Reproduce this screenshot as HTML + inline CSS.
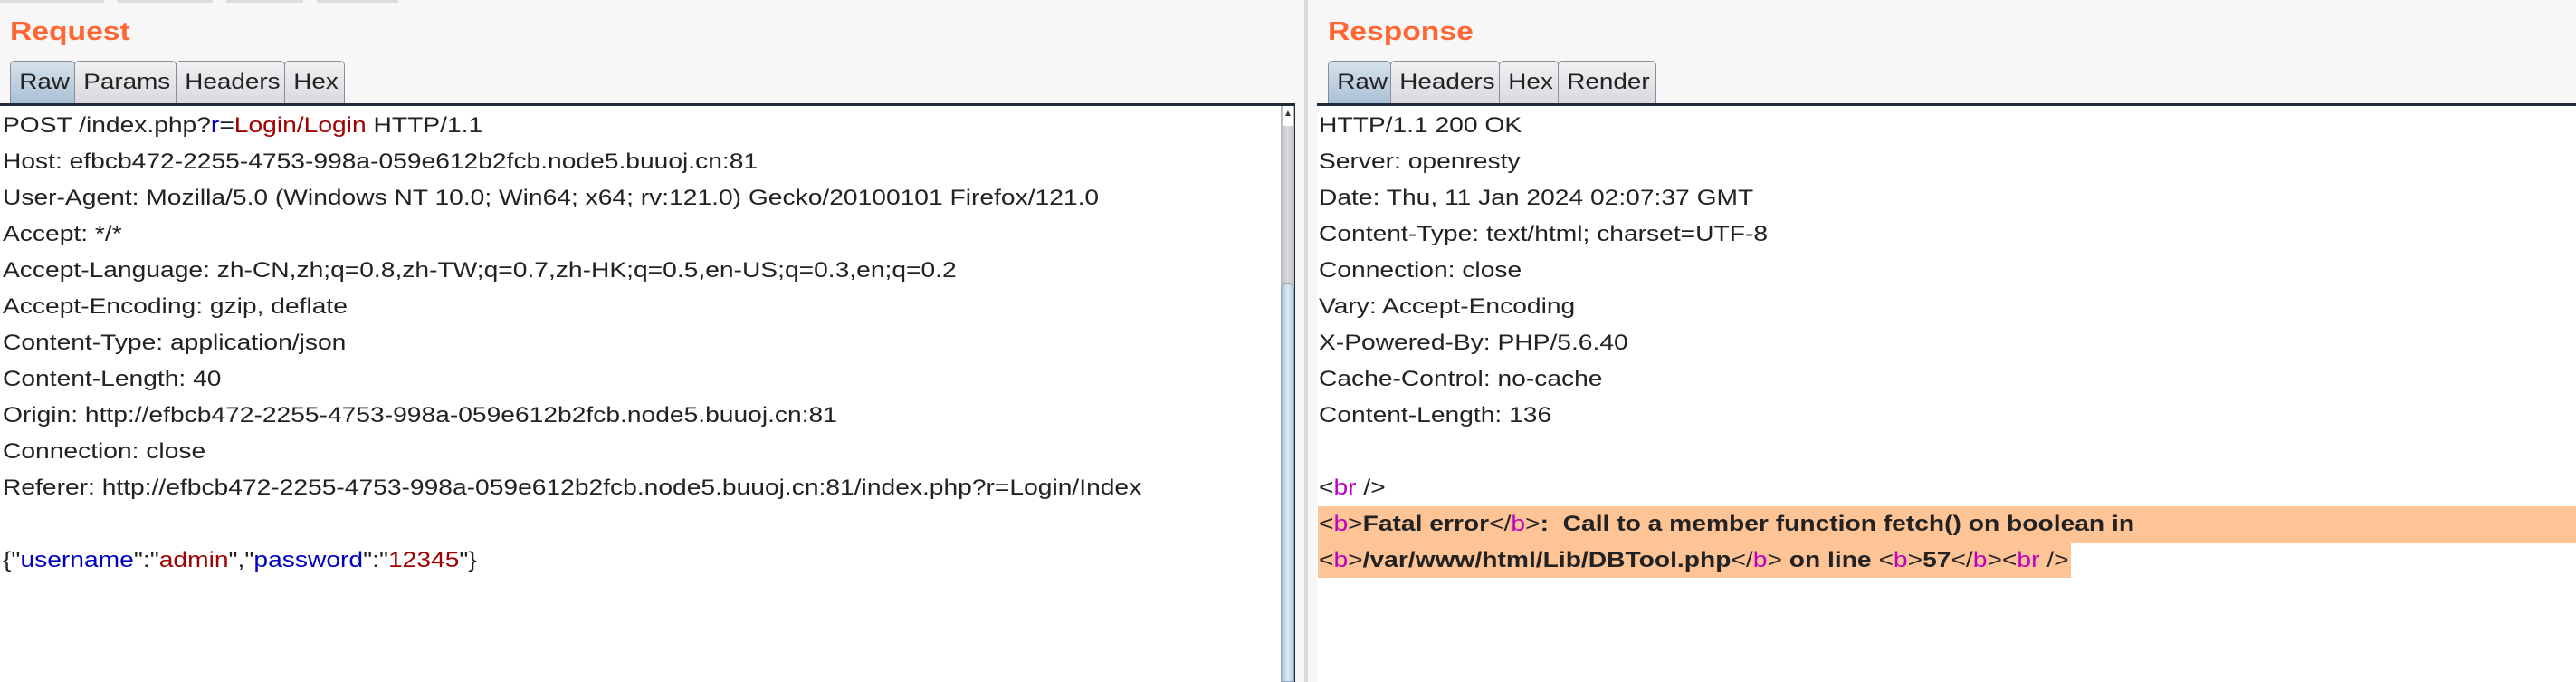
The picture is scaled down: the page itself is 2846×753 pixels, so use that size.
<!DOCTYPE html>
<html><head><meta charset="utf-8"><style>
*{margin:0;padding:0;box-sizing:border-box}
body{width:2846px;height:753px;overflow:hidden;background:#f7f7f7;font-family:"Liberation Sans",Arial,sans-serif;color:#222;position:relative}
.abs{position:absolute}
.title{position:absolute;top:17px;font-size:29px;font-weight:bold;color:#ff6633;transform:scaleX(1.16);transform-origin:0 0;line-height:36px}
.tab{position:absolute;top:67px;height:48px;border:1px solid #8c8c98;border-bottom:none;border-radius:5px 5px 0 0;background:linear-gradient(#f2f2f4,#d8d8de);font-size:24px;line-height:46px;overflow:hidden}
.tab.sel{background:linear-gradient(#d6e2ec,#a8c0d4)}
.tab span{display:inline-block;transform:scaleX(1.16);transform-origin:0 0;padding-left:8px}
.pane{position:absolute;top:117px;background:#fff;height:636px}
.lines{position:absolute;top:119px;font-size:24px}
.l{height:40px;line-height:40px;white-space:pre;transform:scaleX(1.175);transform-origin:0 0}
.b{color:#0000c0}.r{color:#a00000}.m{color:#c000c0}
.hl{background:#ffc496}
strong{font-weight:bold}
</style></head><body>
<div class="abs" style="left:0;top:0;width:115px;height:3px;background:#ddd"></div>
<div class="abs" style="left:130px;top:0;width:105px;height:3px;background:#ddd"></div>
<div class="abs" style="left:250px;top:0;width:85px;height:3px;background:#ddd"></div>
<div class="abs" style="left:350px;top:0;width:90px;height:3px;background:#ddd"></div>

<div class="title" style="left:11px">Request</div>
<div class="title" style="left:1467px">Response</div>

<div class="tab sel" style="left:11px;width:72px"><span>Raw</span></div>
<div class="tab" style="left:82px;width:113px"><span>Params</span></div>
<div class="tab" style="left:194px;width:121px"><span>Headers</span></div>
<div class="tab" style="left:314px;width:67px"><span>Hex</span></div>

<div class="tab sel" style="left:1467px;width:70px"><span>Raw</span></div>
<div class="tab" style="left:1536px;width:121px"><span>Headers</span></div>
<div class="tab" style="left:1656px;width:66px"><span>Hex</span></div>
<div class="tab" style="left:1721px;width:109px"><span>Render</span></div>

<div class="abs" style="left:0;top:114px;width:1431px;height:3px;background:#1e2a36"></div>
<div class="abs" style="left:1455px;top:114px;width:1391px;height:3px;background:#1e2a36"></div>

<div class="pane" style="left:0;width:1415px"></div>
<div class="abs" style="left:1415px;top:117px;width:15px;height:636px;background:linear-gradient(90deg,#b8b8bc,#dcdce0,#c0c0c4)"></div>
<div class="abs" style="left:1415px;top:313px;width:15px;height:440px;background:linear-gradient(90deg,#a9c0d4,#dcebf6,#b8cde0);border-radius:6px 6px 0 0;border:1px solid #8fa6bb"></div>
<div class="abs" style="left:1417px;top:117px;width:12px;height:22px;background:#fff;color:#333;font-size:10px;text-align:center;line-height:18px">▲</div>
<div class="abs" style="left:1430px;top:117px;width:1px;height:636px;background:#1e2a36"></div>
<div class="abs" style="left:1441px;top:0;width:4px;height:753px;background:#d8d8de"></div>
<div class="pane" style="left:1455px;width:1391px"></div>

<div class="lines" style="left:3px">
<div class="l">POST /index.php?<span class="b">r</span>=<span class="r">Login/Login</span> HTTP/1.1</div>
<div class="l">Host: efbcb472-2255-4753-998a-059e612b2fcb.node5.buuoj.cn:81</div>
<div class="l">User-Agent: Mozilla/5.0 (Windows NT 10.0; Win64; x64; rv:121.0) Gecko/20100101 Firefox/121.0</div>
<div class="l">Accept: */*</div>
<div class="l">Accept-Language: zh-CN,zh;q=0.8,zh-TW;q=0.7,zh-HK;q=0.5,en-US;q=0.3,en;q=0.2</div>
<div class="l">Accept-Encoding: gzip, deflate</div>
<div class="l">Content-Type: application/json</div>
<div class="l">Content-Length: 40</div>
<div class="l">Origin: http://efbcb472-2255-4753-998a-059e612b2fcb.node5.buuoj.cn:81</div>
<div class="l">Connection: close</div>
<div class="l">Referer: http://efbcb472-2255-4753-998a-059e612b2fcb.node5.buuoj.cn:81/index.php?r=Login/Index</div>
<div class="l"> </div>
<div class="l">{"<span class="b">username</span>":"<span class="r">admin</span>","<span class="b">password</span>":"<span class="r">12345</span>"}</div>
</div>

<div class="abs hl" style="left:1456px;top:559px;width:1390px;height:40px"></div>
<div class="abs hl" style="left:1456px;top:599px;width:832px;height:39px"></div>

<div class="lines" style="left:1457px">
<div class="l">HTTP/1.1 200 OK</div>
<div class="l">Server: openresty</div>
<div class="l">Date: Thu, 11 Jan 2024 02:07:37 GMT</div>
<div class="l">Content-Type: text/html; charset=UTF-8</div>
<div class="l">Connection: close</div>
<div class="l">Vary: Accept-Encoding</div>
<div class="l">X-Powered-By: PHP/5.6.40</div>
<div class="l">Cache-Control: no-cache</div>
<div class="l">Content-Length: 136</div>
<div class="l"> </div>
<div class="l">&lt;<span class="m">br</span> /&gt;</div>
<div class="l">&lt;<span class="m">b</span>&gt;<strong>Fatal error</strong>&lt;/<span class="m">b</span>&gt;<strong>:  Call to a member function fetch() on boolean in</strong></div>
<div class="l">&lt;<span class="m">b</span>&gt;<strong>/var/www/html/Lib/DBTool.php</strong>&lt;/<span class="m">b</span>&gt;<strong> on line </strong>&lt;<span class="m">b</span>&gt;<strong>57</strong>&lt;/<span class="m">b</span>&gt;&lt;<span class="m">br</span> /&gt;</div>
</div>
</body></html>
